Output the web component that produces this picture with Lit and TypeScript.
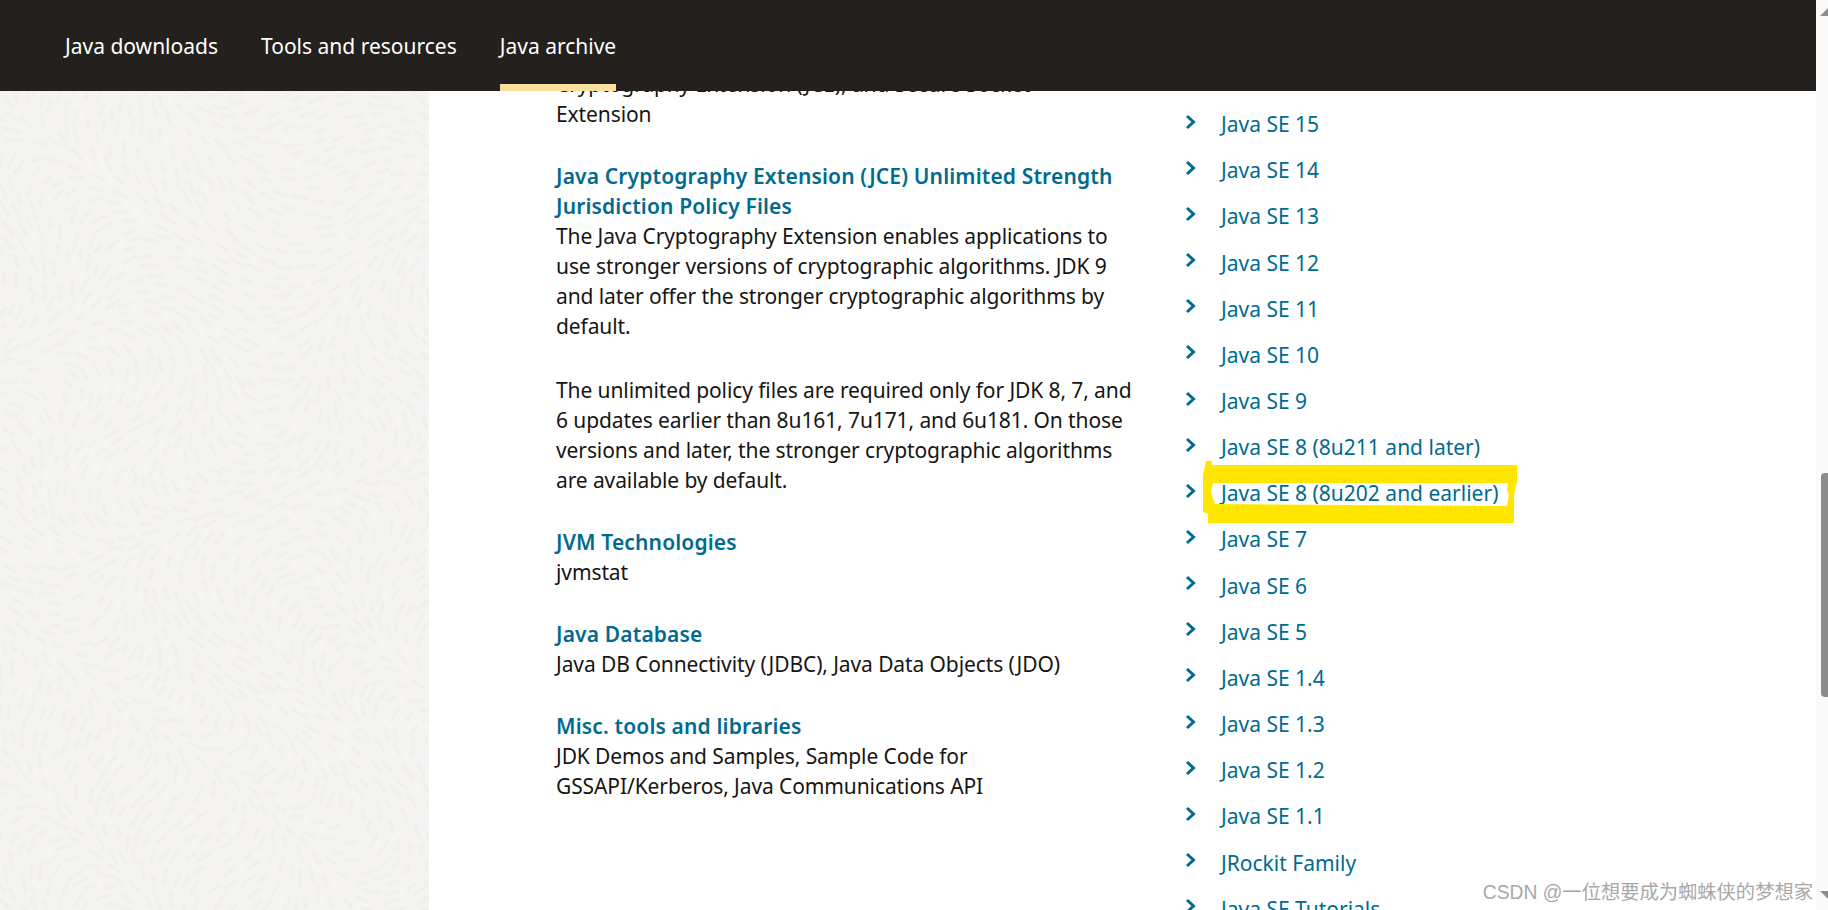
import { LitElement, html, css, svg } from "lit";
import { customElement } from "lit/decorators.js";

const RELEASES = [
  "Java SE 15",
  "Java SE 14",
  "Java SE 13",
  "Java SE 12",
  "Java SE 11",
  "Java SE 10",
  "Java SE 9",
  "Java SE 8 (8u211 and later)",
  "Java SE 8 (8u202 and earlier)",
  "Java SE 7",
  "Java SE 6",
  "Java SE 5",
  "Java SE 1.4",
  "Java SE 1.3",
  "Java SE 1.2",
  "Java SE 1.1",
  "JRockit Family",
  "Java SE Tutorials",
];

// short dashes following a wavy flow field, like the paper texture on the side
function texturePath(width: number, height: number) {
  let seed = 7;
  const rnd = () => {
    seed = (seed * 16807) % 2147483647;
    return seed / 2147483647;
  };
  const placed: { x: number; y: number }[] = [];
  let d = "";
  for (let i = 0; i < 12000; i++) {
    const px = rnd() * width;
    const py = rnd() * height;
    const a =
      Math.sin(px / 70 + Math.cos(py / 95) * 1.6) * 1.5 +
      Math.cos(py / 60 - px / 130) * 1.1 +
      (rnd() - 0.5) * 0.25;
    const ca = Math.cos(a);
    const sa = Math.sin(a);
    // keep dashes apart: more room along the dash than across it
    const crowded = placed.some((p) => {
      const along = ((p.x - px) * ca + (p.y - py) * sa) / 19;
      const across = ((p.x - px) * sa - (p.y - py) * ca) / 8;
      return along * along + across * across < 1;
    });
    if (crowded) continue;
    placed.push({ x: px, y: py });
    const len = 4 + rnd() * 4;
    const dx = ca * len;
    const dy = sa * len;
    d += `M${(px - dx).toFixed(1)} ${(py - dy).toFixed(1)}L${(px + dx).toFixed(1)} ${(py + dy).toFixed(1)}`;
  }
  return d;
}

@customElement("app-root")
export class AppRoot extends LitElement {
  static styles = css`
    :host {
      display: block;
      position: relative;
      height: 910px;
      overflow: hidden;
      font-family: "Noto Sans", "Open Sans", sans-serif;
      font-size: 21px;
      line-height: 30px;
      color: #161513;
      background: #fff;
    }
    .nav {
      position: absolute;
      top: 0;
      left: 0;
      width: 1816px;
      height: 91px;
      z-index: 2;
      display: flex;
      gap: 43px;
      padding-left: 65px;
      box-sizing: border-box;
      background: #24201d;
    }
    .nav a {
      display: flex;
      align-items: center;
      color: #fff;
    }
    .nav a.active {
      box-shadow: inset 0 -7px 0 #f9df9e;
    }
    .page {
      display: flex;
      height: 910px;
    }
    .texture {
      flex: 0 0 429px;
      background: #f5f4f2;
    }
    .texture svg {
      display: block;
    }
    .main {
      flex: 1;
      display: flex;
      overflow: hidden;
      padding-left: 127px;
    }
    .left {
      flex: 0 0 629px;
      padding-top: 69px;
    }
    .left section {
      width: 580px;
      margin-bottom: 32px;
    }
    .left p {
      margin: 0 0 34px;
      letter-spacing: -0.1px;
    }
    .left p:last-child {
      margin-bottom: 0;
    }
    .left h4 {
      margin: 0;
      font-size: 21px;
      font-weight: 600;
      color: #006b8f;
      letter-spacing: 0.15px;
    }
    .right {
      padding-top: 101px;
    }
    .right ul {
      list-style: none;
      margin: 0;
      padding: 0;
    }
    .right li {
      display: flex;
      align-items: center;
      height: 46.17px;
      color: #006b8f;
    }
    .right li svg {
      flex: none;
      margin: -5px 24px 0 0;
    }
    .scrollbar {
      flex: 0 0 12px;
      background: #fafafa;
    }
    .arrow {
      width: 8px;
      height: 8px;
      margin-left: 4px;
      background: #8e8e8e;
    }
    .arrow.up {
      margin-top: 8px;
      clip-path: polygon(100% 0, 100% 100%, 0 100%);
    }
    .arrow.down {
      margin-top: 194px;
      clip-path: polygon(0 0, 100% 0, 100% 100%);
    }
    .thumb {
      width: 7px;
      height: 224px;
      margin: 457px 0 0 5px;
      background: #8c8c8c;
      border-radius: 4px 0 0 4px;
    }
    .marker {
      position: absolute;
      top: 0;
      left: 0;
      pointer-events: none;
    }
    .watermark {
      position: absolute;
      right: 15px;
      bottom: 4px;
      font-family: "Liberation Sans", "Noto Sans CJK SC", sans-serif;
      font-size: 19.3px;
      line-height: 26px;
      color: #a8a8a8;
      white-space: nowrap;
    }
  `;

  private chevron() {
    return html`<svg width="12" height="16" viewBox="0 0 12 16">
      <path d="M2 2l6.5 6L2 14" fill="none" stroke="#006b8f" stroke-width="3" />
    </svg>`;
  }

  private texture = texturePath(429, 910);

  protected render() {
    return html`
      <div class="nav">
        <a>Java downloads</a>
        <a>Tools and resources</a>
        <a class="active">Java archive</a>
      </div>
      <div class="page">
        <div class="texture">
          <svg width="429" height="910" viewBox="0 0 429 910">
            ${svg`<path d=${this.texture} fill="none" stroke="#f1f0ec" stroke-width="4" stroke-linecap="round" />`}
          </svg>
        </div>
        <div class="main">
          <div class="left">
            <section>
              <p>Cryptography Extension (JCE), and Secure Socket<br />Extension</p>
            </section>
            <section>
              <h4>Java Cryptography Extension (JCE) Unlimited Strength Jurisdiction Policy Files</h4>
              <p>
                The Java Cryptography Extension enables applications to use stronger versions of
                cryptographic algorithms. JDK 9 and later offer the stronger cryptographic
                algorithms by default.
              </p>
              <p>
                The unlimited policy files are required only for JDK 8, 7, and 6 updates earlier
                than 8u161, 7u171, and 6u181. On those versions and later, the stronger
                cryptographic algorithms are available by default.
              </p>
            </section>
            <section>
              <h4>JVM Technologies</h4>
              <p>jvmstat</p>
            </section>
            <section>
              <h4>Java Database</h4>
              <p>Java DB Connectivity (JDBC), Java Data Objects (JDO)</p>
            </section>
            <section>
              <h4>Misc. tools and libraries</h4>
              <p>JDK Demos and Samples, Sample Code for GSSAPI/Kerberos, Java Communications API</p>
            </section>
          </div>
          <div class="right">
            <ul>
              ${RELEASES.map((name) => html`<li>${this.chevron()}<span>${name}</span></li>`)}
            </ul>
          </div>
        </div>
        <div class="scrollbar">
          <div class="arrow up"></div>
          <div class="thumb"></div>
          <div class="arrow down"></div>
        </div>
      </div>
      <svg class="marker" width="1828" height="910" viewBox="0 0 1828 910">
        <path
          fill="#ffe600"
          fill-rule="evenodd"
          d="M1206 461L1212 461L1212 465L1517 465L1517 482L1514 495L1514 523L1208 523L1208 514L1203 512L1203 475Z
             M1213 483L1508 483L1507 490L1509 495L1507 506L1215 504L1211 493Z"
        />
      </svg>
      <div class="watermark">CSDN @一位想要成为蜘蛛侠的梦想家</div>
    `;
  }
}

declare global {
  interface HTMLElementTagNameMap {
    "app-root": AppRoot;
  }
}
